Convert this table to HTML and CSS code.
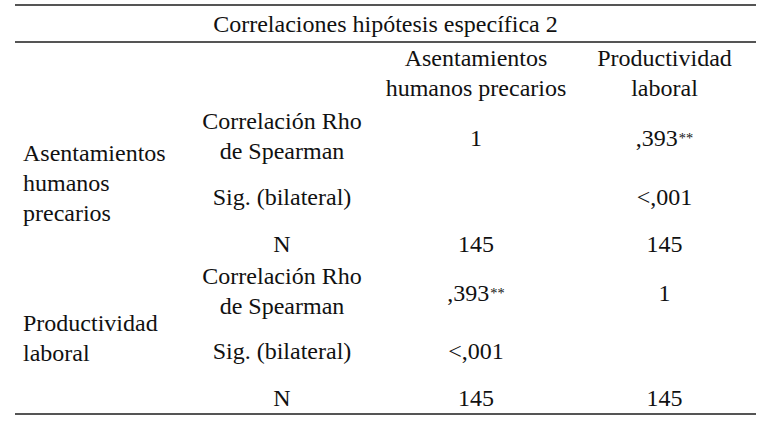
FILE: index.html
```html
<!DOCTYPE html>
<html>
<head>
<meta charset="utf-8">
<title>Correlaciones hipótesis específica 2</title>
<link rel="stylesheet" href="styles.css">
</head>
<body>
<div class="table">
  <div class="title">Correlaciones hipótesis específica 2</div>
  <div class="grid">
    <div class="cell head c3">Asentamientos humanos precarios</div>
    <div class="cell head c4">Productividad laboral</div>

    <div class="cell label ra">Asentamientos humanos precarios</div>
    <div class="cell stat r1">Correlación Rho de Spearman</div>
    <div class="cell val r1 c3 nudge">1</div>
    <div class="cell val r1 c4 nudge">,393<sup>**</sup></div>
    <div class="cell stat r2">Sig. (bilateral)</div>
    <div class="cell val r2 c4">&lt;,001</div>
    <div class="cell stat r3">N</div>
    <div class="cell val r3 c3">145</div>
    <div class="cell val r3 c4">145</div>

    <div class="cell label rb">Productividad laboral</div>
    <div class="cell stat r4">Correlación Rho de Spearman</div>
    <div class="cell val r4 c3 nudge">,393<sup>**</sup></div>
    <div class="cell val r4 c4 nudge">1</div>
    <div class="cell stat r5">Sig. (bilateral)</div>
    <div class="cell val r5 c3">&lt;,001</div>
    <div class="cell stat r6">N</div>
    <div class="cell val r6 c3">145</div>
    <div class="cell val r6 c4">145</div>
  </div>
</div>
</body>
</html>
```
FILE: styles.css
```css
html, body {
  margin: 0;
  padding: 0;
  background: #ffffff;
}

body {
  font-family: "Liberation Serif", serif;
  font-size: 24px;
  line-height: 30px;
  color: #111111;
}

.table {
  width: 741px;
  margin: 4px 0 0 15px;
  border-top: 2px solid #555555;
  border-bottom: 2px solid #555555;
}

.title {
  height: 35px;
  display: flex;
  align-items: center;
  justify-content: center;
  border-bottom: 2px solid #555555;
}

.grid {
  display: grid;
  grid-template-columns: 170px 194px 194px 183px;
  grid-template-rows: 61px 64px 58px 36px 58px 62px 31px;
}

.cell {
  display: flex;
  align-items: center;
  justify-content: center;
  text-align: center;
}

.head {
  grid-row: 1;
  align-items: flex-start;
}

.label {
  grid-column: 1;
  justify-content: flex-start;
  text-align: left;
  padding-left: 8px;
  padding-right: 6px;
}

.ra { grid-row: 2 / 5; }
.rb { grid-row: 5 / 8; }

.stat {
  grid-column: 2;
  padding: 0 10px;
}

.c3 { grid-column: 3; }
.c4 { grid-column: 4; }

.r1 { grid-row: 2; }
.r2 { grid-row: 3; }
.r3 { grid-row: 4; }
.r4 { grid-row: 5; }
.r5 { grid-row: 6; }
.r6 { grid-row: 7; }

.nudge {
  padding-top: 4px;
}

sup {
  font-size: 0.6em;
  line-height: 0;
  vertical-align: 0.7em;
  margin-left: 1px;
}
```
